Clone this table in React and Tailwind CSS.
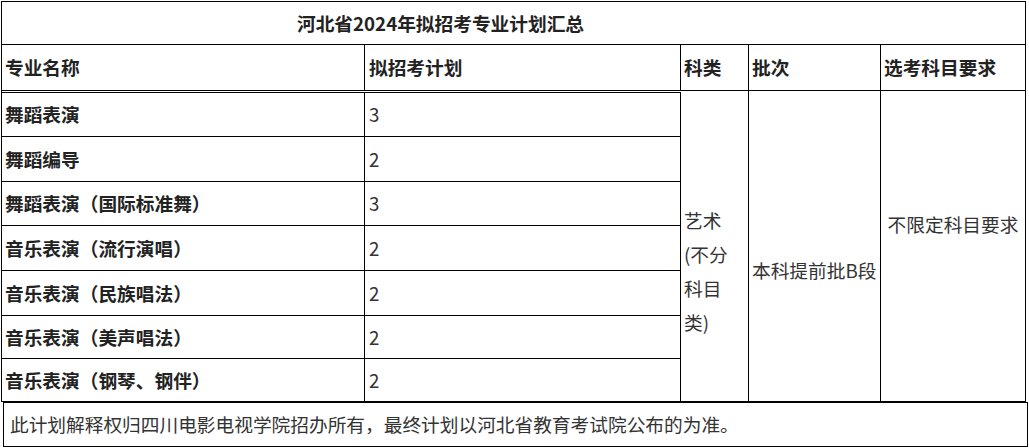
import React from "react";

const rows = [
  { name: "舞蹈表演", plan: "3", h: "h-[44px]" },
  { name: "舞蹈编导", plan: "2", h: "h-[45px]" },
  { name: "舞蹈表演（国际标准舞）", plan: "3", h: "h-[44px]" },
  { name: "音乐表演（流行演唱）", plan: "2", h: "h-[45px]" },
  { name: "音乐表演（民族唱法）", plan: "2", h: "h-[45px]" },
  { name: "音乐表演（美声唱法）", plan: "2", h: "h-[43px]" },
  { name: "音乐表演（钢琴、钢伴）", plan: "2", h: "h-[43px]" },
];

export default function App() {
  return (
    <div
      className="bg-white w-[1029px] h-[448px] pt-px text-[18.7px] text-[#333]"
      style={{ fontFamily: '"Noto Sans CJK SC", "Noto Sans", sans-serif' }}
    >
      <div className="w-[1025px] ml-px">
        {/* title */}
        <div className="h-[44px] border border-black flex items-center pl-[295px] font-bold text-[#222]">
          河北省2024年拟招考专业计划汇总
        </div>

        <div className="flex border-l border-black">
          {/* left part: name + plan */}
          <div className="w-[679px] flex flex-col">
            <div className="flex h-[48px] border-b-[3px] border-double border-black font-bold text-[#222]">
              <div className="w-[363px] border-r border-black flex items-center pl-[3px]">
                专业名称
              </div>
              <div className="w-[316px] border-r border-black flex items-center pl-[4px]">
                拟招考计划
              </div>
            </div>
            {rows.map((r) => (
              <div key={r.name} className={`flex ${r.h} border-b border-black`}>
                <div className="w-[363px] border-r border-black flex items-center pl-[3px] font-bold text-[#222]">
                  {r.name}
                </div>
                <div className="w-[316px] border-r border-black flex items-center pl-[4px]">
                  {r.plan}
                </div>
              </div>
            ))}
          </div>

          {/* right part: merged columns */}
          <div className="w-[345px] flex flex-col">
            <div className="flex h-[46px] border-b border-black font-bold text-[#222]">
              <div className="w-[68px] border-r border-black flex items-center pl-[3px]">
                科类
              </div>
              <div className="w-[132px] border-r border-black flex items-center pl-[3px]">
                批次
              </div>
              <div className="w-[145px] border-r border-black flex items-center pl-[3px]">
                选考科目要求
              </div>
            </div>
            <div className="flex flex-1 border-b border-black leading-[34px]">
              <div className="w-[68px] border-r border-black pl-[3px] pt-[112px]">
                艺术
                <br />
                (不分
                <br />
                科目
                <br />
                类)
              </div>
              <div className="w-[132px] border-r border-black pl-[3px] pt-[162px] whitespace-nowrap">
                本科提前批B段
              </div>
              <div className="w-[145px] border-r border-black text-center pt-[116px] whitespace-nowrap">
                不限定科目要求
              </div>
            </div>
          </div>
        </div>

        {/* footer note */}
        <div className="ml-[2px] w-[1025px] h-[45px] border border-black flex items-center pl-[6px]">
          此计划解释权归四川电影电视学院招办所有，最终计划以河北省教育考试院公布的为准。
        </div>
      </div>
    </div>
  );
}
